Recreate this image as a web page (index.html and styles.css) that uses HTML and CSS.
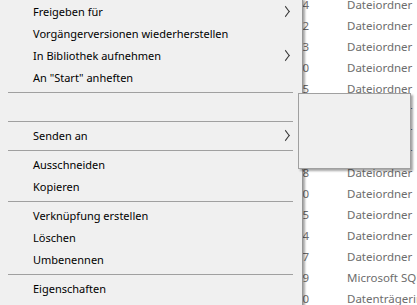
FILE: index.html
```html
<!DOCTYPE html>
<html lang="de">
<head>
    <meta charset="UTF-8">
    <title>Kontextmenü</title>
    <link rel="stylesheet" href="styles.css">
</head>
<body>

    <!-- Dateiliste im Hintergrund -->
    <div class="file-list">
        <div class="file-row"><span class="col-date">12:04</span><span class="col-type">Dateiordner</span></div>
        <div class="file-row"><span class="col-date">12:22</span><span class="col-type">Dateiordner</span></div>
        <div class="file-row"><span class="col-date">12:13</span><span class="col-type">Dateiordner</span></div>
        <div class="file-row"><span class="col-date">12:10</span><span class="col-type">Dateiordner</span></div>
        <div class="file-row"><span class="col-date">12:05</span><span class="col-type">Dateiordner</span></div>
        <div class="file-row"><span class="col-date">12:06</span><span class="col-type">Dateiordner</span></div>
        <div class="file-row"><span class="col-date">12:01</span><span class="col-type">Dateiordner</span></div>
        <div class="file-row"><span class="col-date">12:02</span><span class="col-type">Dateiordner</span></div>
        <div class="file-row"><span class="col-date">12:08</span><span class="col-type">Dateiordner</span></div>
        <div class="file-row"><span class="col-date">12:20</span><span class="col-type">Dateiordner</span></div>
        <div class="file-row"><span class="col-date">12:15</span><span class="col-type">Dateiordner</span></div>
        <div class="file-row"><span class="col-date">12:14</span><span class="col-type">Dateiordner</span></div>
        <div class="file-row"><span class="col-date">12:07</span><span class="col-type">Dateiordner</span></div>
        <div class="file-row"><span class="col-date">12:09</span><span class="col-type">Microsoft SQL Server</span></div>
        <div class="file-row"><span class="col-date">12:10</span><span class="col-type">Datenträgerimage</span></div>
    </div>

    <!-- Kontextmenü -->
    <div class="context-menu">
        <div class="menu-item has-sub">Freigeben für</div>
        <div class="menu-item">Vorgängerversionen wiederherstellen</div>
        <div class="menu-item has-sub">In Bibliothek aufnehmen</div>
        <div class="menu-item">An "Start" anheften</div>
        <div class="menu-sep"></div>
        <div class="menu-item"></div>
        <div class="menu-sep"></div>
        <div class="menu-item has-sub">Senden an</div>
        <div class="menu-sep"></div>
        <div class="menu-item">Ausschneiden</div>
        <div class="menu-item">Kopieren</div>
        <div class="menu-sep"></div>
        <div class="menu-item">Verknüpfung erstellen</div>
        <div class="menu-item">Löschen</div>
        <div class="menu-item">Umbenennen</div>
        <div class="menu-sep"></div>
        <div class="menu-item">Eigenschaften</div>
    </div>

    <!-- leeres Untermenü -->
    <div class="sub-menu"></div>

</body>
</html>
```

FILE: styles.css
```css
body {
    margin: 0;
    background: #fff;
    font-family: "Noto Sans", "Open Sans", sans-serif;
    font-size: 11px;
    overflow: hidden;
}

.file-list {
    margin-top: -6px;
}

.file-row {
    display: flex;
    width: max-content;
    height: 21px;
    line-height: 21px;
    color: #6d6d6d;
    font-size: 11.5px;
    white-space: nowrap;
}

.col-date {
    flex-shrink: 0;
    width: 309px;
    text-align: right;
}

.col-type {
    flex-shrink: 0;
    margin-left: 38px;
}

.context-menu {
    position: absolute;
    left: 0;
    top: 0;
    width: 302px;
    height: 320px;
    padding-top: 1px;
    background: #f0f0f0;
    border-right: 1px solid #979797;
    box-shadow: 2px 0 2px rgba(0, 0, 0, 0.35);
    color: #000;
}

.menu-item {
    position: relative;
    height: 22px;
    line-height: 22px;
    padding-left: 33px;
}

.has-sub::after {
    content: "";
    position: absolute;
    left: 282px;
    top: 7px;
    width: 6px;
    height: 6px;
    border-top: 1px solid #333;
    border-right: 1px solid #333;
    transform: rotate(45deg) skew(8deg, 8deg);
}

.menu-sep {
    height: 7px;
    position: relative;
}

.menu-sep::before {
    content: "";
    position: absolute;
    left: 8px;
    width: 285px;
    top: 3px;
    height: 1px;
    background: #a0a0a0;
}

.sub-menu {
    position: absolute;
    left: 298px;
    top: 93px;
    width: 111px;
    height: 74px;
    background: #f0f0f0;
    border: 1px solid #a0a0a0;
    box-shadow: 2px 2px 2px rgba(0, 0, 0, 0.35);
}
```
